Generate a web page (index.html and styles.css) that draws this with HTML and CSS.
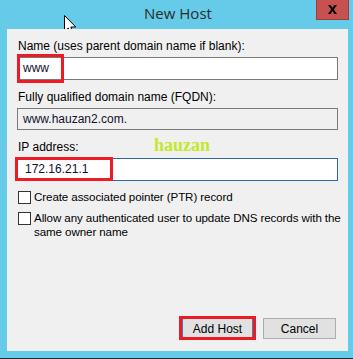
FILE: index.html
```html
<!DOCTYPE html>
<html>
<head>
<meta charset="utf-8">
<link rel="stylesheet" href="styles.css">
</head>
<body>
<div class="window">
  <div class="titlebar">
    <span class="title">New Host</span>
    <button class="close" aria-label="Close">
      <svg width="11" height="9" viewBox="0 0 11 9"><path d="M1 0 L3.5 0 L5.5 2.8 L7.5 0 L10 0 L6.8 4.5 L10 9 L7.5 9 L5.5 6.2 L3.5 9 L1 9 L4.2 4.5 Z" fill="#000"/></svg>
    </button>
  </div>
  <svg class="cursor" width="13" height="21" viewBox="0 0 13 21"><path d="M0.5 0.5 L0.5 16.5 L4.2 13 L6.8 19.5 L9.3 18.4 L6.8 12 L11.8 12 Z" fill="#fff" stroke="#000" stroke-width="1" stroke-linejoin="miter"/></svg>
  <div class="client">
    <label class="label first">Name (uses parent domain name if blank):</label>
    <div class="field">
      <div class="input">www</div>
      <span class="mark mark-name"></span>
    </div>
    <label class="label">Fully qualified domain name (FQDN):</label>
    <div class="field">
      <div class="input readonly">www.hauzan2.com.</div>
    </div>
    <label class="label">IP address:</label>
    <div class="field">
      <div class="input focus">172.16.21.1</div>
      <span class="mark mark-ip"></span>
    </div>
    <span class="watermark">hauzan</span>
    <div class="check first-check">
      <span class="box"></span>
      <span class="check-text">Create associated pointer (PTR) record</span>
    </div>
    <div class="check">
      <span class="box"></span>
      <span class="check-text">Allow any authenticated user to update DNS records with the same owner name</span>
    </div>
    <div class="buttons">
      <div class="btn-wrap">
        <button class="btn default">Add Host</button>
        <span class="mark mark-btn"></span>
      </div>
      <button class="btn">Cancel</button>
    </div>
  </div>
</div>
</body>
</html>
```

FILE: styles.css
```css
html, body {
  margin: 0;
  padding: 0;
}
body {
  width: 353px;
  height: 359px;
  background: #2b2b2b;
  font-family: "Liberation Sans", Arial, sans-serif;
  font-size: 12px;
  color: #000;
  overflow: hidden;
}
.window {
  position: relative;
  width: 353px;
  height: 358px;
  background: #65cbe9;
  display: flex;
  flex-direction: column;
}
.titlebar {
  height: 29px;
  display: grid;
  grid-template-columns: 1fr auto 1fr;
  align-items: start;
}
.title {
  grid-column: 2;
  font-family: "Open Sans", "Noto Sans", sans-serif;
  font-size: 15px;
  color: #2b2b2b;
  line-height: 20px;
  margin-top: 3px;
  padding-left: 3px;
}
.close {
  grid-column: 3;
  justify-self: end;
  margin-right: 4px;
  width: 33px;
  height: 20px;
  padding: 0;
  border: 1px solid #9c3c3c;
  border-top: none;
  background: #c75050;
  display: flex;
  align-items: center;
  justify-content: center;
}
.cursor {
  position: absolute;
  left: 64px;
  top: 15px;
}
.client {
  position: relative;
  flex: 1;
  margin: 0 5px 7px 7px;
  background: #f0f0f0;
  padding: 10px 10px 12px 10px;
  display: flex;
  flex-direction: column;
}
.label {
  display: block;
  line-height: 15px;
  padding-left: 1px;
  margin-top: 10px;
  margin-bottom: 3px;
}
.label.first {
  margin-top: 0;
}
.field {
  position: relative;
}
.input {
  height: 21px;
  border: 1px solid #7a7a7a;
  background: #fff;
  line-height: 21px;
  padding-left: 5px;
  color: #101030;
}
.input.readonly {
  background: #f0f0f0;
  height: 20px;
  line-height: 20px;
}
.input.focus {
  border-color: #2b6ca8;
  padding-left: 7px;
}
.mark {
  position: absolute;
  border: 3px solid #ed1c24;
  pointer-events: none;
}
.mark-name {
  left: 0;
  top: -3px;
  width: 41px;
  height: 23px;
}
.mark-ip {
  left: -2px;
  top: -1px;
  width: 92px;
  height: 18px;
}
.mark-btn {
  left: -3px;
  top: -2px;
  width: 71px;
  height: 18px;
}
.watermark {
  position: absolute;
  left: 147px;
  top: 106px;
  font-family: "Liberation Serif", "Times New Roman", serif;
  font-weight: bold;
  font-size: 18px;
  color: #c3e82a;
}
.check {
  display: flex;
  align-items: flex-start;
  gap: 3px;
  margin-top: 7px;
  margin-right: -10px;
  padding-left: 1px;
  line-height: 14px;
}
.check.first-check {
  margin-top: 9px;
}
.box {
  flex: none;
  width: 11px;
  height: 11px;
  border: 1px solid #333;
  background: #fff;
  margin-top: 1px;
}
.check-text {
  flex: 1;
  font-size: 11.6px;
  letter-spacing: -0.1px;
}
.buttons {
  margin-top: auto;
  display: flex;
  justify-content: flex-end;
  gap: 10px;
  padding-right: 2px;
}
.btn-wrap {
  position: relative;
  display: flex;
}
.btn {
  width: 73px;
  height: 21px;
  border: 1px solid #adadad;
  background: #e1e1e1;
  font-family: "Liberation Sans", Arial, sans-serif;
  font-size: 12px;
  color: #000;
  padding: 0;
}
.btn.default {
  width: 71px;
  border-color: #3c7fb1;
}
```
